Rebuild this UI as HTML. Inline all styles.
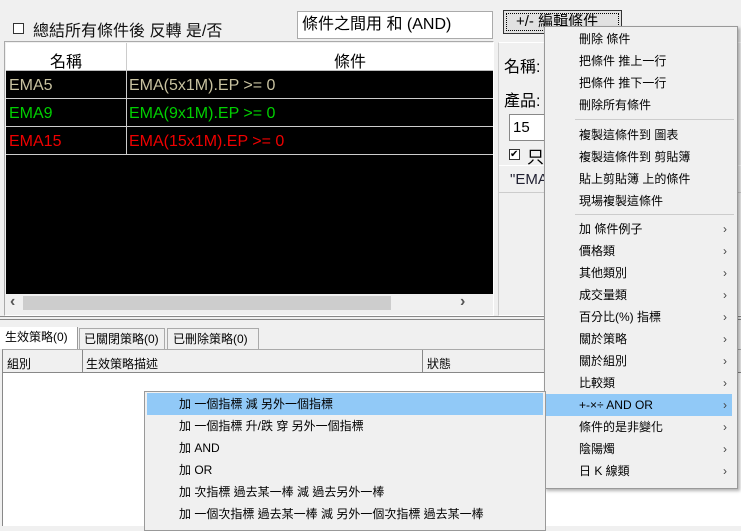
<!DOCTYPE html><html><head><meta charset="utf-8"><style>
*{margin:0;padding:0;box-sizing:border-box}
body{width:741px;height:526px;overflow:hidden;background:#f0f0f0;font-family:"Liberation Sans","Noto Sans CJK TC",sans-serif;position:relative;color:#000}
.a{position:absolute;white-space:nowrap}
.m{font-size:12px}
.it{position:absolute;left:0;right:0;height:22px;line-height:22px;font-size:12px}
.it span{position:absolute;left:34px}
.it b{position:absolute;right:10px;font-weight:normal;color:#444;font-size:12px}
</style></head><body>
<!-- top -->
<div class="a" style="left:13px;top:23px;width:11px;height:11px;border:1px solid #333;background:#fff"></div>
<div class="a" style="left:33px;top:17px;font-size:16px;color:#111">總結所有條件後 反轉 是/否</div>
<div class="a" style="left:297px;top:11px;width:196px;height:28px;background:#fff;border:1px solid #aaa;font-size:16px;line-height:26px;padding-left:4px">條件之間用 和 (AND)</div>
<div class="a" style="left:503px;top:10px;width:119px;height:24px;border:1px solid #333;background:#e1e1e1;outline:1px dotted #000;outline-offset:-4px;font-size:15px;line-height:22px;padding-left:12px">+/- 編輯條件</div>
<!-- grid -->
<div class="a" style="left:4px;top:41px;width:490px;height:275px;border:1px solid #aaa;border-right-color:#fff;border-bottom-color:#fff"></div>
<div class="a" style="left:6px;top:43px;width:487px;height:268px;background:#000"></div>
<div class="a" style="left:6px;top:43px;width:487px;height:28px;background:#fff;border-bottom:1px solid #bbb"></div>
<div class="a" style="left:126px;top:43px;width:1px;height:112px;background:#ccc"></div>
<div class="a" style="left:50px;top:48px;font-size:16px">名稱</div>
<div class="a" style="left:334px;top:48px;font-size:16px">條件</div>
<div class="a" style="left:6px;top:98px;width:487px;height:1px;background:#ccc"></div>
<div class="a" style="left:6px;top:126px;width:487px;height:1px;background:#ccc"></div>
<div class="a" style="left:6px;top:154px;width:487px;height:1px;background:#ccc"></div>
<div class="a" style="left:9px;top:77px;font-size:16px;color:#c8c2a0">EMA5</div>
<div class="a" style="left:129px;top:77px;font-size:16px;color:#c8c2a0">EMA(5x1M).EP &gt;= 0</div>
<div class="a" style="left:9px;top:105px;font-size:16px;color:#00d000">EMA9</div>
<div class="a" style="left:129px;top:105px;font-size:16px;color:#00d000">EMA(9x1M).EP &gt;= 0</div>
<div class="a" style="left:9px;top:133px;font-size:16px;color:#f00000">EMA15</div>
<div class="a" style="left:129px;top:133px;font-size:16px;color:#f00000">EMA(15x1M).EP &gt;= 0</div>
<div class="a" style="left:6px;top:294px;width:487px;height:17px;background:#f0f0f0"></div>
<div class="a" style="left:23px;top:296px;width:368px;height:14px;background:#cdcdcd"></div>
<div class="a" style="left:10px;top:293px;font-size:16px;font-weight:bold;color:#555">&lsaquo;</div>
<div class="a" style="left:460px;top:293px;font-size:16px;font-weight:bold;color:#555">&rsaquo;</div>
<!-- right panel -->
<div class="a" style="left:498px;top:42px;width:243px;height:274px;border:1px solid #fff;border-right:none;border-left-color:#ccc"></div>
<div class="a" style="left:504px;top:53px;font-size:16px">名稱:</div>
<div class="a" style="left:504px;top:87px;font-size:16px">產品:</div>
<div class="a" style="left:509px;top:114px;width:40px;height:27px;background:#fff;border:1px solid #888;font-size:15px;line-height:25px;padding-left:3px">15</div>
<div class="a" style="left:509px;top:149px;width:11px;height:11px;border:1px solid #333;background:#fff;font-size:10px;line-height:9px">✔</div>
<div class="a" style="left:527px;top:143px;font-size:17px">只</div>
<div class="a" style="left:499px;top:165px;width:242px;height:28px;border-top:1px solid #fff;border-bottom:1px solid #ccc;font-size:15px;line-height:28px;padding-left:11px;color:#223">"EMA</div>
<!-- separator -->
<div class="a" style="left:0;top:316px;width:741px;height:1px;background:#888"></div>
<div class="a" style="left:0;top:319px;width:741px;height:1px;background:#888"></div>
<!-- tabs -->
<div class="a" style="left:0;top:327px;width:78px;height:22px;background:#fff;border-right:1px solid #999;font-size:12px;line-height:20px;padding-left:5px">生效策略(0)</div>
<div class="a" style="left:79px;top:328px;width:86px;height:21px;border:1px solid #aaa;border-bottom:none;font-size:12px;line-height:20px;padding-left:4px">已關閉策略(0)</div>
<div class="a" style="left:167px;top:328px;width:92px;height:21px;border:1px solid #aaa;border-bottom:none;font-size:12px;line-height:20px;padding-left:5px">已刪除策略(0)</div>
<div class="a" style="left:2px;top:349px;width:739px;height:177px;background:#fff;border-left:1px solid #888;border-top:1px solid #aaa"></div>
<div class="a" style="left:3px;top:350px;width:738px;height:23px;background:#f0f0f0;border-bottom:1px solid #888"></div>
<div class="a" style="left:82px;top:350px;width:1px;height:23px;background:#888"></div>
<div class="a" style="left:422px;top:350px;width:1px;height:23px;background:#888"></div>
<div class="a m" style="left:7px;top:355px">組別</div>
<div class="a m" style="left:86px;top:355px">生效策略描述</div>
<div class="a m" style="left:427px;top:355px">狀態</div>
<!-- main menu -->
<div class="a" style="left:544px;top:26px;width:194px;height:463px;background:#f0f0f0;border:1px solid #999;box-shadow:2px 2px 3px rgba(0,0,0,.3)">
<div class="it" style="top:1px"><span>刪除 條件</span></div>
<div class="it" style="top:23px"><span>把條件 推上一行</span></div>
<div class="it" style="top:45px"><span>把條件 推下一行</span></div>
<div class="it" style="top:67px"><span>刪除所有條件</span></div>
<div class="a" style="left:30px;right:3px;top:92px;height:1px;background:#ccc"></div>
<div class="it" style="top:97px"><span>複製這條件到 圖表</span></div>
<div class="it" style="top:119px"><span>複製這條件到 剪貼簿</span></div>
<div class="it" style="top:141px"><span>貼上剪貼簿 上的條件</span></div>
<div class="it" style="top:163px"><span>現場複製這條件</span></div>
<div class="a" style="left:30px;right:3px;top:187px;height:1px;background:#ccc"></div>
<div class="it" style="top:191px"><span>加 條件例子</span><b>›</b></div>
<div class="it" style="top:213px"><span>價格類</span><b>›</b></div>
<div class="it" style="top:235px"><span>其他類別</span><b>›</b></div>
<div class="it" style="top:257px"><span>成交量類</span><b>›</b></div>
<div class="it" style="top:279px"><span>百分比(%) 指標</span><b>›</b></div>
<div class="it" style="top:301px"><span>關於策略</span><b>›</b></div>
<div class="it" style="top:323px"><span>關於組別</span><b>›</b></div>
<div class="it" style="top:345px"><span>比較類</span><b>›</b></div>
<div class="it" style="top:367px;background:#91c9f7;right:5px"><span>+-×÷ AND OR</span><b style="right:5px">›</b></div>
<div class="it" style="top:389px"><span>條件的是非變化</span><b>›</b></div>
<div class="it" style="top:411px"><span>陰陽燭</span><b>›</b></div>
<div class="it" style="top:433px"><span>日 K 線類</span><b>›</b></div>
</div>
<!-- submenu -->
<div class="a" style="left:144px;top:391px;width:402px;height:140px;background:#f0f0f0;border:1px solid #999">
<div class="it" style="top:1px;left:2px;right:2px;background:#91c9f7"><span style="left:32px">加 一個指標 減 另外一個指標</span></div>
<div class="it" style="top:23px"><span>加 一個指標 升/跌 穿 另外一個指標</span></div>
<div class="it" style="top:45px"><span>加 AND</span></div>
<div class="it" style="top:67px"><span>加 OR</span></div>
<div class="it" style="top:89px"><span>加 次指標 過去某一棒 減 過去另外一棒</span></div>
<div class="it" style="top:111px"><span>加 一個次指標 過去某一棒 減 另外一個次指標 過去某一棒</span></div>
</div>
</body></html>
